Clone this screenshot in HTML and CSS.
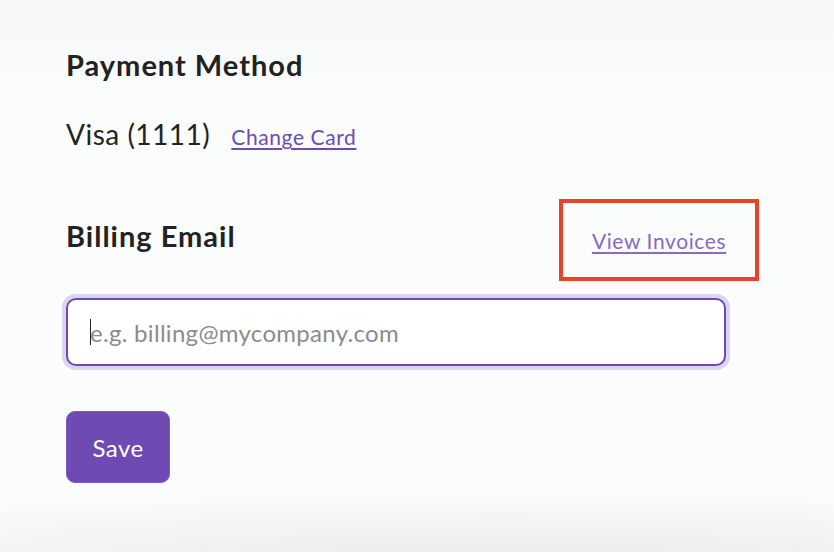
FILE: index.html
```html
<!DOCTYPE html>
<html lang="en">
<head>
<meta charset="utf-8">
<title>Billing settings</title>
<link rel="stylesheet" href="styles.css">
</head>
<body>
<div class="page">
  <section class="block">
    <h2 class="heading">Payment Method</h2>
    <p class="card-row">
      <span class="card-name">Visa (1111)</span>
      <a class="link" href="#">Change Card</a>
    </p>
  </section>

  <section class="block">
    <div class="email-head">
      <h2 class="heading heading-email">Billing Email</h2>
      <div class="highlight">
        <a class="link link-light" href="#">View Invoices</a>
      </div>
    </div>
    <div class="field">
      <span class="caret"></span>
      <input class="input" type="email" placeholder="e.g. billing@mycompany.com">
    </div>
    <button class="btn" type="button">Save</button>
  </section>
</div>
</body>
</html>
```

FILE: styles.css
```css
html, body { margin: 0; height: 100%; }
body {
  font-family: "Lato", "Open Sans", sans-serif;
  color: #232323;
  background:
    radial-gradient(ellipse 900px 70px at 60% 560px, #e9ebeb 0, rgba(233,235,235,0) 100%),
    linear-gradient(to bottom, #f5f6f8 0, #fbfcfc 95px, #fbfcfc 100%);
  overflow: hidden;
}

.page { width: 700px; padding: 48px 0 0 66px; }

.heading {
  margin: 0;
  font-size: 29px;
  font-weight: 700;
  line-height: 34px;
  letter-spacing: 1px;
  color: #222;
}
.heading-email { padding-top: 20px; }

.card-row {
  margin: 35px 0 0;
  display: flex;
  align-items: baseline;
  gap: 21px;
}
.card-name { font-size: 28px; letter-spacing: 0.5px; }

.link {
  color: #6d4bb6;
  font-size: 21px;
  letter-spacing: 0.6px;
  text-decoration: underline;
  text-underline-offset: 3px;
}
.link-light { color: #8a68c6; }

.block + .block { margin-top: 48px; }

.email-head {
  display: flex;
  align-items: flex-start;
  justify-content: space-between;
  width: 693px;
}
.highlight {
  width: 192px;
  height: 74px;
  border: 4px solid #e8442b;
  display: flex;
  align-items: center;
  justify-content: center;
}

.field {
  position: relative;
  margin-top: 17px;
  width: 660px;
}
.input {
  box-sizing: border-box;
  display: block;
  width: 100%;
  height: 68px;
  border: 2px solid #6d4bb6;
  border-radius: 10px;
  box-shadow: 0 0 0 4px #dcd3ef;
  background: #fff;
  padding: 0 22px;
  font-family: inherit;
  font-size: 24px;
  letter-spacing: 0.3px;
  color: #222;
  outline: none;
}
.input::placeholder { color: #8c8c8c; }
.caret {
  position: absolute;
  left: 24px;
  top: 21px;
  width: 1px;
  height: 26px;
  background: #222;
}

.btn {
  display: block;
  margin-top: 45px;
  width: 104px;
  height: 72px;
  border: 1px solid #7b5cc0;
  border-radius: 9px;
  background: #6d4bb3;
  color: #fff;
  font-family: inherit;
  font-size: 24px;
  font-weight: 400;
  letter-spacing: 0.5px;
}
```
